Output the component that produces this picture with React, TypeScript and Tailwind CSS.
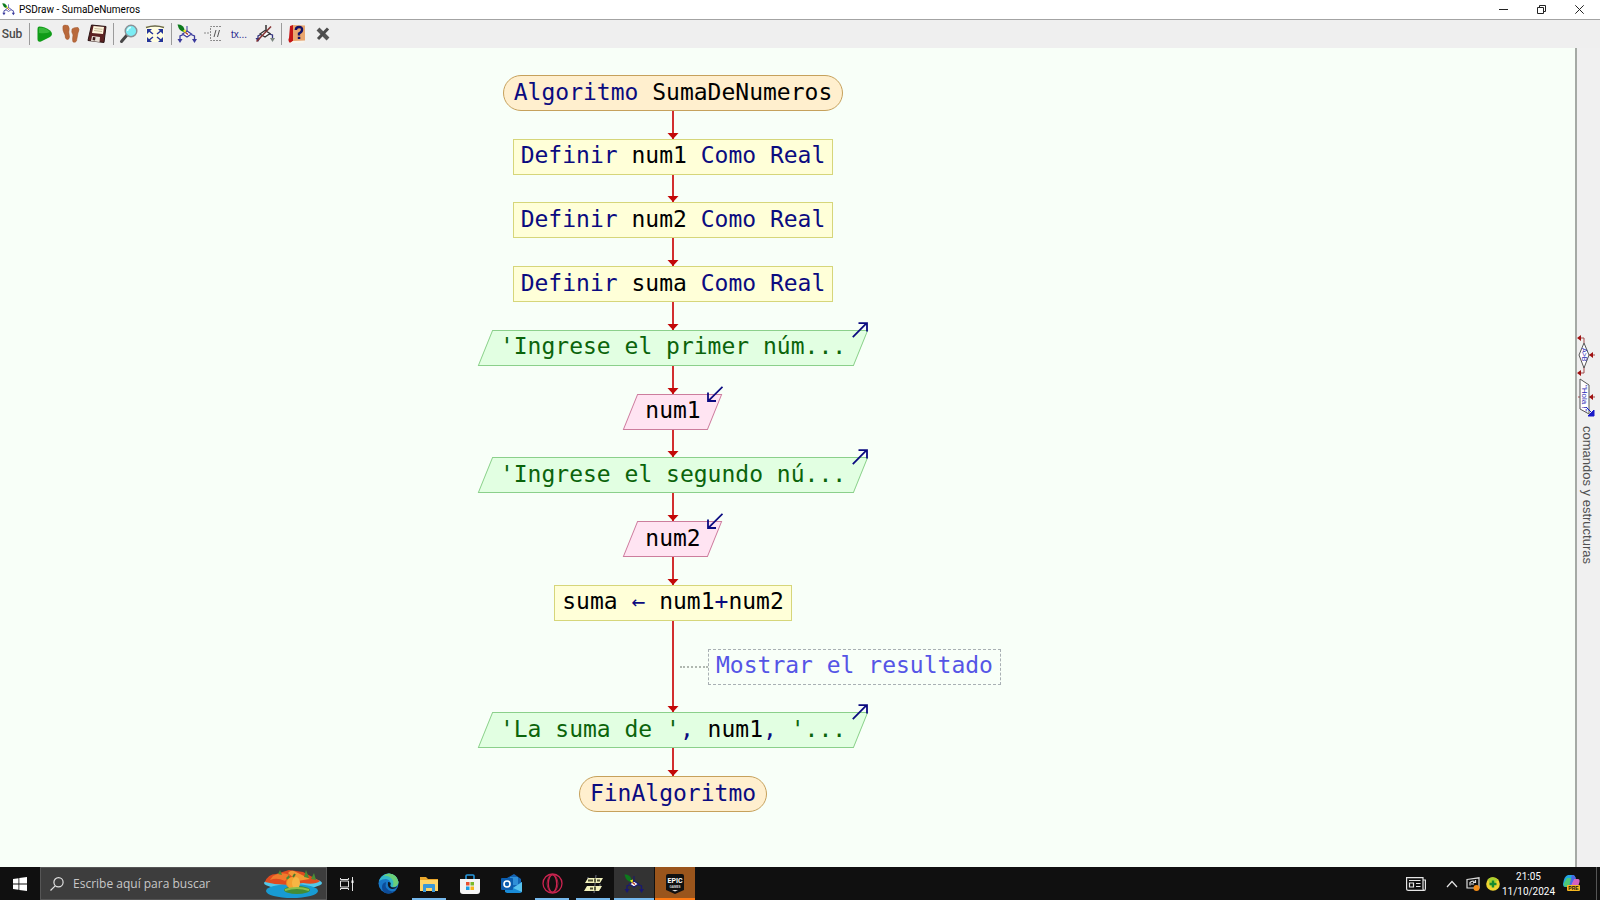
import type { ReactNode } from "react";

const BLUE = "text-[#0b0b80]";

function Connector({ arrow = true }: { arrow?: boolean }) {
  return (
    <div className="relative z-10 flex min-h-4 flex-1 flex-col items-center">
      <div className="w-[2px] flex-1 bg-[#d22f2f]" />
      {arrow && (
        <svg className="absolute bottom-0 h-[6px] w-3" viewBox="0 0 12 6">
          <path d="M.5 0H11.5L6 6Z" fill="#c30808" />
        </svg>
      )}
    </div>
  );
}

function Terminal({ children }: { children: ReactNode }) {
  return (
    <div className="flex h-9 shrink-0 items-center whitespace-pre rounded-full border border-[#c6a15c] bg-[#ffefce] px-[10px]">
      <span className="pb-[3px] leading-7">{children}</span>
    </div>
  );
}

function Process({ children }: { children: ReactNode }) {
  return (
    <div className="flex h-9 shrink-0 items-center whitespace-pre border border-[#d6d67a] bg-[#ffffd8] px-[7px]">
      <span className="pb-[3px] leading-7">{children}</span>
    </div>
  );
}

function OutArrow() {
  return (
    <svg className="absolute right-0 -top-2 size-4" viewBox="0 0 16 16" fill="none" stroke="#0b0b80" strokeWidth="1.8">
      <path d="M.8 15.2 14.6 1.2M6.5 1.2H15V9.5" />
    </svg>
  );
}

function InArrow() {
  return (
    <svg className="absolute right-0 -top-2 size-4" viewBox="0 0 16 16" fill="none" stroke="#0b0b80" strokeWidth="1.8">
      <path d="M15.5.8 1.4 14.8M1 6.5V15H9" />
    </svg>
  );
}

function InputOutput({ kind, children }: { kind: "in" | "out"; children: ReactNode }) {
  const skin = kind === "out" ? "border-[#8bd08b] bg-[#e2ffe2]" : "border-[#cc7d9d] bg-[#ffe4f2]";
  return (
    <div className="relative flex h-9 shrink-0 items-center whitespace-pre px-[22px]">
      <div className={`absolute inset-x-[7px] inset-y-0 -skew-x-[22deg] border ${skin}`} />
      <span className="relative pb-[3px] leading-7">{children}</span>
      {kind === "out" ? <OutArrow /> : <InArrow />}
    </div>
  );
}

function Definition({ name }: { name: string }) {
  return (
    <Process>
      <span className={BLUE}>Definir </span>{name}<span className={BLUE}> Como Real</span>
    </Process>
  );
}

function FlowIcon({ size = 20, leaf = true, dark = false }: { size?: number; leaf?: boolean; dark?: boolean }) {
  const line = dark ? "#191970" : "#3a3a9c";
  return (
    <svg width={size} height={size} viewBox="0 0 20 20" fill="none">
      <path d="M6.500 10.500 3 12V16M14 10.500 17.500 12V16" stroke={line} strokeWidth="1.3" />
      <path d="M5.500 10 10 7 14.500 10 10 13Z" stroke={line} strokeWidth="1.2" fill="#fff" />
      <path d="M10 2V7" stroke={line} />
      <path d="M.5 15H5.500L3 19ZM15 15H20L17.500 19Z" fill={line} />
      {leaf && (
        <>
          <path d="M.5.500Q5 0 7 4L8 8Q2 8 .5.500Z" fill="#0c7a1c" />
          <path d="M6 6.500 9 5.500 8.500 9.500Z" fill="#f0ea20" />
          <path d="M8.500 8.500 11 10.500" stroke="#b5391f" strokeWidth="1.500" />
        </>
      )}
    </svg>
  );
}

function Tool({ label, children }: { label: string; children: ReactNode }) {
  return (
    <button type="button" aria-label={label} className="flex h-[26px] w-[26px] items-center justify-center">
      {children}
    </button>
  );
}

function Separator() {
  return (
    <div className="flex h-[22px] w-[6px] justify-center">
      <div className="w-px bg-[#9b9b9b]" />
    </div>
  );
}

function Toolbar() {
  return (
    <div className="flex h-7 shrink-0 items-center bg-[#efefef]">
      <button type="button" aria-label="Subprocesos" className="flex w-[26px] justify-center pr-[2px] font-['Roboto',sans-serif] text-[12px] font-medium text-[#4a4a4a]">
        Sub
      </button>
      <Separator />
      <Tool label="Ejecutar">
        <svg width="18" height="18" viewBox="0 0 18 18">
          <path d="M3 1.500Q1.500 1.500 1.500 4V14Q1.500 17.500 5 16.500L14 12Q18 9 14 5.500Q9 1.500 3 1.500Z" fill="#109c18" />
          <path d="M3 3Q9 2 14 7Q10 9 3 8Z" fill="#38b83b" />
        </svg>
      </Tool>
      <Tool label="Paso a paso">
        <svg width="20" height="20" viewBox="0 0 20 20" fill="#b9693b" stroke="#a1562c" strokeWidth=".5">
          <path d="M2 2Q3 .5 7 1.500Q9 4 7.800 8L8.500 13Q8 16 6 15.500Q4 15 4 11Q1 6 2 2Z" />
          <path d="M11 5Q13 3 17 3.500Q19 5 17 9L15.500 17Q14.500 19 12 18Q11 16 12 11Q10 8 11 5Z" />
        </svg>
      </Tool>
      <Tool label="Guardar">
        <svg width="20" height="20" viewBox="0 0 20 20">
          <path d="M4.500 1 19 2.500 17 18.500 1 16.500Z" fill="#5c2222" stroke="#2b1515" />
          <path d="M6.500 2 17 3 16 10 5 9Z" fill="#fff6dd" />
          <path d="M7.500 4.500 15.500 5.300M7 6.500 15 7.500" stroke="#c9bd9d" />
          <path d="M5 12 13 13 12.500 18 4 17Z" fill="#e7dfd6" />
          <path d="M6 13 8.500 13.300 8 16.500 5.500 16Z" fill="#3b1919" />
        </svg>
      </Tool>
      <Separator />
      <Tool label="Zoom">
        <svg width="20" height="20" viewBox="0 0 20 20">
          <path d="M8 11 2.500 17.500" stroke="#474747" strokeWidth="3" strokeLinecap="round" />
          <circle cx="12" cy="7" r="5.800" fill="#7cecf4" stroke="#8c9196" strokeWidth="1.400" />
          <path d="M8.500 7Q9 3.500 12 3.500" stroke="#d8ffff" strokeWidth="1.500" fill="none" />
        </svg>
      </Tool>
      <Tool label="Ajustar">
        <svg width="20" height="18" viewBox="0 0 20 18">
          <path d="M1 1H19V17H1Z" fill="#fffde2" />
          <path d="M1 2.500Q10-.5 19 2.500" stroke="#6a6848" strokeWidth="1.500" fill="none" />
          <path d="M2 4H7L2 9ZM18 4H13L18 9ZM2 17H7L2 12ZM18 17H13L18 12Z" fill="#24349a" />
          <path d="M3 5 8 9M17 5 12 9M3 16 8 12M17 16 12 12" stroke="#24349a" strokeWidth="1.500" />
        </svg>
      </Tool>
      <Separator />
      <Tool label="Editar diagrama"><FlowIcon /></Tool>
      <Tool label="Comentarios">
        <svg width="20" height="18" viewBox="0 0 20 18" fill="none" stroke="#8a8a8a">
          <path d="M1 8H7" strokeDasharray="2 1" />
          <path d="M18 1.500H7.500V15.500H18" strokeDasharray="2 1" />
          <path d="M11 12 13 5M14.500 12 16.500 5" stroke="#555" />
        </svg>
      </Tool>
      <Tool label="Texto completo">
        <span className="font-['Liberation_Sans',sans-serif] text-[10px] text-[#29298e]">tx...</span>
      </Tool>
      <Tool label="Sintaxis">
        <svg width="20" height="20" viewBox="0 0 20 20" fill="none">
          <path d="M6 10.500 3 12V15M14 10 17.500 11V15" stroke="#33337e" strokeWidth="1.300" />
          <path d="M5 10 10 6.500 15 9.500 10 13Z" stroke="#333" strokeWidth="1.300" fill="#fff" />
          <path d="M.5 14H5.500L3 18Z" fill="#33337e" />
          <path d="M15 14H20L17.500 18Z" fill="#7c8780" />
          <path d="M1.500 17.500 16 2.500" stroke="#843030" strokeWidth="1.500" />
          <path d="M11 1V7" stroke="#333" strokeWidth="1.500" />
        </svg>
      </Tool>
      <Separator />
      <Tool label="Ayuda">
        <svg width="18" height="20" viewBox="0 0 18 20">
          <path d="M2 2 5 1V17L2 19Q-.5 17 1 14Z" fill="#c51414" />
          <path d="M5 1 17 1.500V16.500L5 17Z" fill="#eaa66e" />
          <path d="M2 19 5 17H17L15 19Z" fill="#f8f4ec" />
          <path d="M7.800 6Q8 3 11 3Q14.500 3 14 6Q14 8 11 9.500V11.500" stroke="#121268" strokeWidth="2.400" fill="none" />
          <path d="M9.800 12.800H12.300V15H9.800Z" fill="#121268" />
        </svg>
      </Tool>
      <Tool label="Cerrar panel">
        <svg width="16" height="16" viewBox="0 0 16 16">
          <path d="M3 3 13 13" stroke="#555" strokeWidth="4" />
          <path d="M13 2.500 3 13" stroke="#4b4b4b" strokeWidth="3" />
        </svg>
      </Tool>
    </div>
  );
}

function TitleBar() {
  return (
    <header className="flex h-5 shrink-0 items-center justify-between border-b border-[#a3a3a3] bg-white">
      <h1 className="flex items-center gap-1 pl-[2px] font-['Roboto',sans-serif] text-[10px] leading-4 text-black">
        <FlowIcon size={13} /> PSDraw - SumaDeNumeros
      </h1>
      <div className="flex h-full pr-[2px]">
        <button type="button" aria-label="Minimizar" className="flex w-[38px] items-center justify-center">
          <svg width="9" height="9" viewBox="0 0 9 9" stroke="#222"><path d="M0 4.500H9" /></svg>
        </button>
        <button type="button" aria-label="Restaurar" className="flex w-[38px] items-center justify-center">
          <svg width="9" height="9" viewBox="0 0 9 9" fill="none" stroke="#222"><path d="M.5 2.500H6.500V8.500H.5ZM2.500 2.500V.5H8.500V6.500H6.500" /></svg>
        </button>
        <button type="button" aria-label="Cerrar" className="flex w-[38px] items-center justify-center">
          <svg width="9" height="9" viewBox="0 0 9 9" stroke="#222"><path d="M.3.3 8.700 8.700M8.700.3.3 8.700" /></svg>
        </button>
      </div>
    </header>
  );
}

function Diagram() {
  return (
    <main className="flex min-h-0 min-w-0 flex-1 flex-col items-center bg-[#f8fff8] pb-[55px] pr-[229px] pt-[27px] font-['DejaVu_Sans_Mono',monospace] text-[23px] text-black">
      <Terminal><span className={BLUE}>Algoritmo </span>SumaDeNumeros</Terminal>
      <Connector />
      <Definition name="num1" />
      <Connector />
      <Definition name="num2" />
      <Connector />
      <Definition name="suma" />
      <Connector />
      <InputOutput kind="out"><span className="text-[#0b640b]">'Ingrese el primer núm...</span></InputOutput>
      <Connector />
      <InputOutput kind="in">num1</InputOutput>
      <Connector />
      <InputOutput kind="out"><span className="text-[#0b640b]">'Ingrese el segundo nú...</span></InputOutput>
      <Connector />
      <InputOutput kind="in">num2</InputOutput>
      <Connector />
      <Process>suma <span className={BLUE}>←</span> num1<span className={BLUE}>+</span>num2</Process>
      <Connector arrow={false} />
      <div className="grid h-9 w-full shrink-0 grid-cols-[1fr_2px_1fr]">
        <div />
        <div className="bg-[#d22f2f]" />
        <div className="flex items-center pl-[6px]">
          <div className="w-7 border-t-2 border-dotted border-[#b0b8b0]" />
          <div className="flex h-9 items-center whitespace-pre border border-dashed border-[#a9b0b4] px-[7px] text-[#5555e6]">
            <span className="pb-[3px] leading-7">Mostrar el resultado</span>
          </div>
        </div>
      </div>
      <Connector />
      <InputOutput kind="out">
        <span className="text-[#0b640b]">'La suma de '</span><span className={BLUE}>, </span>num1<span className={BLUE}>, </span><span className="text-[#0b640b]">'...</span>
      </InputOutput>
      <Connector />
      <Terminal><span className={BLUE}>FinAlgoritmo</span></Terminal>
    </main>
  );
}

function CommandsPanel() {
  return (
    <aside className="w-[25px] shrink-0 border-l-2 border-[#a5aaa5] bg-[#f0f0f0]">
      <button type="button" className="flex h-full w-full flex-col items-center pr-[3px] pt-[286px]">
        <svg className="shrink-0" width="20" height="86" viewBox="0 0 20 86" fill="none">
          <path d="M2 4H7V9M7 33V39H2M12 21H18M1 63H18" stroke="#a04a4a" />
          <path d="M0 4 4 1V7ZM0 39 4 36V42ZM12 21 16 18V24ZM12 63 16 60V66Z" fill="#a11212" />
          <path d="M7 9 12 21 7 34 2 21Z" fill="#fff" stroke="#555" />
          <path d="M3 45 12 51V80L3 75Z" fill="#fff" stroke="#555" />
          <path d="M9 73 17 81M17 76V82H11Z" fill="#1818c8" stroke="#1818c8" />
          <text transform="translate(5 14) rotate(90)" fill="#2b2bb4" className="font-['Liberation_Sans',sans-serif] text-[7px]">A&gt;B</text>
          <text transform="translate(5 51) rotate(90)" fill="#2b2bb4" className="font-['Liberation_Sans',sans-serif] text-[8px]">"Hola !"</text>
        </svg>
        <span className="mt-[6px] whitespace-nowrap font-['Liberation_Sans',sans-serif] text-[13px] leading-5 text-[#505050] [writing-mode:vertical-rl]">
          comandos y estructuras
        </span>
      </button>
    </aside>
  );
}

function TaskButton({ label, slot = "", line = "", children }: { label: string; slot?: string; line?: string; children: ReactNode }) {
  return (
    <button type="button" aria-label={label} className={`relative flex w-10 items-center justify-center ${slot}`}>
      {children}
      {line && <span className={`absolute bottom-0 h-[2px] ${line}`} />}
    </button>
  );
}

function PumpkinIsland() {
  return (
    <svg width="60" height="30" viewBox="0 0 60 30">
      <ellipse cx="30" cy="14" rx="29" ry="6" fill="#52c8ea" />
      <ellipse cx="29" cy="22" rx="26" ry="7" fill="#189bd3" />
      <path d="M2 13Q5 5 13 5L26 1 40 3 57 12Q52 16 40 14Q20 18 2 13Z" fill="#df4b20" />
      <path d="M10 7Q18 2 27 6L22 12Q14 8 7 11Z" fill="#f17a2c" />
      <path d="M25 4Q28 0 33 3L47 10 34 12Z" fill="#f39a35" />
      <path d="M15 5 17 1 19 6ZM41 8 43 1 46 9ZM48 10 51 4 53 11ZM23 9 26 6 28 15Z" fill="#4b8d35" />
      <ellipse cx="34" cy="21" rx="13" ry="4" fill="#438c35" />
      <ellipse cx="26" cy="14" rx="3" ry="4" fill="#e88726" />
      <ellipse cx="29" cy="14" rx="5" ry="6" fill="#f4a130" />
      <ellipse cx="33" cy="14" rx="4" ry="6" fill="#f6b644" />
      <path d="M30 8 32 5" stroke="#4c782b" strokeWidth="2" />
      <path d="M22 21Q34 17 46 21" stroke="#8cc04a" strokeWidth="2" fill="none" />
    </svg>
  );
}

function Taskbar() {
  return (
    <footer className="flex h-[33px] shrink-0 justify-between bg-[#101010] font-['Open_Sans',sans-serif] text-white">
      <div className="flex">
        <button type="button" aria-label="Inicio" className="flex w-10 items-center justify-center">
          <svg width="14" height="14" viewBox="0 0 14 14" fill="#fff">
            <path d="M0 2 5.500 1.200V6.500H0ZM6.300 1 14 0V6.500H6.300ZM0 7.400H5.500V12.800L0 12ZM6.300 7.400H14V14L6.300 13Z" />
          </svg>
        </button>
        <div className="flex w-[287px] items-center border border-[#565656] bg-[#3d3d3d] pl-[9px] pr-[3px]">
          <svg width="14" height="14" viewBox="0 0 14 14" fill="none" stroke="#e0e0e0" strokeWidth="1.200">
            <circle cx="8.500" cy="5.300" r="4.600" /><path d="M5.200 8.800.5 13.500" />
          </svg>
          <input
            type="text"
            aria-label="Buscar"
            placeholder="Escribe aquí para buscar"
            className="ml-[9px] min-w-0 flex-1 bg-transparent text-[12px] leading-4 outline-none placeholder:text-[#c8c8c8]"
          />
          <PumpkinIsland />
        </div>
        <div className="flex gap-px">
          <TaskButton label="Vista de tareas">
            <svg width="14" height="14" viewBox="0 0 14 14" fill="none" stroke="#e5e5e5">
              <path d="M.5 4H8.500V10H.5ZM.5 1V2.500H8.500V1M.5 13V11.500H8.500V13M12.500 0V14" /><path d="M11.500 3.500H13.500V6H11.500Z" fill="#fff" stroke="none" />
            </svg>
          </TaskButton>
          <TaskButton label="Edge">
            <svg width="21" height="21" viewBox="0 0 21 21">
              <circle cx="10.500" cy="10.500" r="10" fill="#1878c9" />
              <path d="M1 8Q4 .5 11 .5Q19 1 20.500 9Q20 14 14.500 14Q11 14 12.500 11Q13 7 8 6Q4 6 1 8Z" fill="#33b9c9" />
              <path d="M11 .5Q19 1 20.500 9Q20 14 14.500 14Q17 9 13 5Q9 2 5 3Q8 .5 11 .5Z" fill="#6bcf78" />
              <path d="M8 9Q6 17 14 18.500Q17 18.500 19 16Q15 21 10 20.500Q4 20 4 14Q4 10 8 9Z" fill="#0d4c99" />
              <path d="M10 9Q13.500 9 12.500 11.500Q11.500 14 15 14.500Q18 14.500 19.500 13Q18 16 14 16Q9 15 10 9Z" fill="#101820" />
            </svg>
          </TaskButton>
          <TaskButton label="Explorador" line="inset-x-[3px] bg-[#76b9ed]">
            <svg width="18" height="16" viewBox="0 0 18 16">
              <path d="M0 1H6L8 3H18V15H0Z" fill="#eaa72c" /><path d="M0 4H18V15H0Z" fill="#ffd568" />
              <path d="M3 16V9Q3 8 4 8H14Q15 8 15 9V16H12V12H6V16Z" fill="#3a98d8" />
            </svg>
          </TaskButton>
          <TaskButton label="Store">
            <svg width="20" height="20" viewBox="0 0 20 20">
              <path d="M6 6V2Q6 1 7 1H13Q14 1 14 2V6" stroke="#2698dd" strokeWidth="1.600" fill="none" />
              <path d="M0 5H20V17Q20 20 17 20H3Q0 20 0 17Z" fill="#f4f4f4" />
              <path d="M6 8H9.500V11.500H6Z" fill="#e85130" /><path d="M10.500 8H14V11.500H10.500Z" fill="#7bb928" />
              <path d="M6 12.500H9.500V16H6Z" fill="#1a9ee4" /><path d="M10.500 12.500H14V16H10.500Z" fill="#f7b51b" />
            </svg>
          </TaskButton>
          <TaskButton label="Outlook">
            <svg width="21" height="20" viewBox="0 0 21 20">
              <path d="M6 4 13 0 20 5V18H6Z" fill="#1464b4" /><path d="M9 3H17V11H9Z" fill="#2f8fd8" />
              <path d="M4 18V10L12 14 21 8V17Q21 19 19 19H6Z" fill="#198bd7" /><path d="M12 14 21 8V18Z" fill="#59c2ee" />
              <rect y="4" width="12" height="12" rx="1" fill="#0b5cad" />
              <circle cx="6" cy="10" r="3" stroke="#fff" strokeWidth="1.600" fill="none" />
            </svg>
          </TaskButton>
          <TaskButton label="Opera GX" line="inset-x-[3px] bg-[#76b9ed]">
            <svg width="21" height="21" viewBox="0 0 21 21" fill="none" stroke="#cc2450" strokeWidth="1.300">
              <circle cx="10.500" cy="10.500" r="9.500" /><ellipse cx="10.500" cy="10.500" rx="4.200" ry="8.700" />
              <path d="M8 2Q2 10.500 8 19M13 2Q19 10.500 13 19" strokeWidth=".7" />
            </svg>
          </TaskButton>
          <TaskButton label="PSeInt" line="inset-x-[3px] bg-[#76b9ed]">
            <svg width="19" height="18" viewBox="0 0 19 18">
              <path d="M12 0 10 18M4 2V6M16 9V14" stroke="#6c7080" />
              <path d="M4 3H19L16 8H1ZM3 11H18L15 16H0Z" fill="#f2f2bd" />
              <path d="M4 5.500H9M11 3.500V7.500M13 5.500H16M6 13.500H9M11 11.500V15.500" stroke="#4a4c33" strokeWidth="1.800" />
            </svg>
          </TaskButton>
          <TaskButton label="PSDraw" slot="bg-[#333]" line="inset-x-0 bg-[#76b9ed]"><FlowIcon dark /></TaskButton>
          <TaskButton label="Epic Games" slot="bg-[#9a551c]" line="inset-x-0 bg-[#ff7a13]">
            <svg width="18" height="20" viewBox="0 0 18 20">
              <path d="M2 0H16Q18 0 18 2V16L9 20 0 16V2Q0 0 2 0Z" fill="#111" />
              <text x="9" y="9" textAnchor="middle" fill="#fff" className="font-['Roboto',sans-serif] text-[7px] font-bold">EPIC</text>
              <text x="9" y="14" textAnchor="middle" fill="#ddd" className="font-['Liberation_Sans',sans-serif] text-[3px] font-bold">GAMES</text>
              <path d="M6 16H12L9 17.500Z" fill="#ddd" />
            </svg>
          </TaskButton>
        </div>
      </div>
      <div className="flex items-center">
        <button type="button" aria-label="Noticias" className="mr-5">
          <svg width="20" height="14" viewBox="0 0 20 14" fill="none" stroke="#e5e5e5" strokeWidth="1.200">
            <path d="M.6.6H17V11.500Q17 13.400 18.200 13.400H2.500Q.6 13.400.6 11.500ZM17 3H19.400V11.500Q19.400 13.400 18.200 13.400M3 3.500H14.500M10 6.500H14.500M10 9.500H14.500" />
            <path d="M3.500 6H7.500V10H3.500Z" />
          </svg>
        </button>
        <button type="button" aria-label="Iconos ocultos" className="mr-2">
          <svg width="12" height="8" viewBox="0 0 12 8" fill="none" stroke="#e5e5e5" strokeWidth="1.200"><path d="M1 7 6 1.500 11 7" /></svg>
        </button>
        <button type="button" aria-label="Actualización" className="mr-[6px]">
          <svg width="14" height="14" viewBox="0 0 14 14" fill="none" stroke="#ddd" strokeWidth="1.200">
            <path d="M1 2.500 13 .8V11H1Z" /><path d="M4 8.500V5.500Q6 3.500 8.500 4.500M9.500 3V5.500H7M5 7H8" />
            <circle cx="10.500" cy="11" r="3" fill="#f28b16" stroke="none" />
          </svg>
        </button>
        <button type="button" aria-label="Antivirus" className="mr-1">
          <svg width="14" height="14" viewBox="0 0 14 14">
            <circle cx="7" cy="7" r="6.800" fill="#eed431" /><path d="M2 2Q7-2 12 3L5 10Z" fill="#a9d12f" />
            <path d="M7 3.500V10.500M3.500 7H10.500" stroke="#168a30" strokeWidth="2.400" />
          </svg>
        </button>
        <div className="w-[49px] text-center font-['Roboto',sans-serif] text-[10px] leading-[15px]">
          <div>21:05</div>
          <div className="-mx-1 whitespace-nowrap">11/10/2024</div>
        </div>
        <button type="button" aria-label="Copilot" className="ml-[10px] mr-[15px]">
          <svg width="18" height="17" viewBox="0 0 18 17">
            <path d="M5 0H10Q12 0 12.500 3L8 12H2Q0 12 0 9Q1 1 5 0Z" fill="#22a4e2" />
            <path d="M4 3 9 3 6 12H2Q0 10 1 8Z" fill="#4cc878" />
            <path d="M11 4H15Q17 4 16.500 7Q15 13 12 13H6Q8 12 9 8Z" fill="#d561bd" />
            <path d="M9 0Q12 0 13 4H11L8 10 6 12Z" fill="#4b67e4" />
            <rect x="4" y="10" width="13" height="6" rx="1" fill="#f5b820" />
            <text x="10.500" y="15" textAnchor="middle" fill="#111" className="font-['Liberation_Sans',sans-serif] text-[5px] font-bold">PRE</text>
          </svg>
        </button>
        <div className="mr-[3px] h-full w-px bg-[#555]" />
      </div>
    </footer>
  );
}

export default function App() {
  return (
    <div className="flex h-screen flex-col overflow-hidden bg-[#f8fff8]">
      <TitleBar />
      <Toolbar />
      <div className="flex min-h-0 flex-1">
        <Diagram />
        <CommandsPanel />
      </div>
      <Taskbar />
    </div>
  );
}
